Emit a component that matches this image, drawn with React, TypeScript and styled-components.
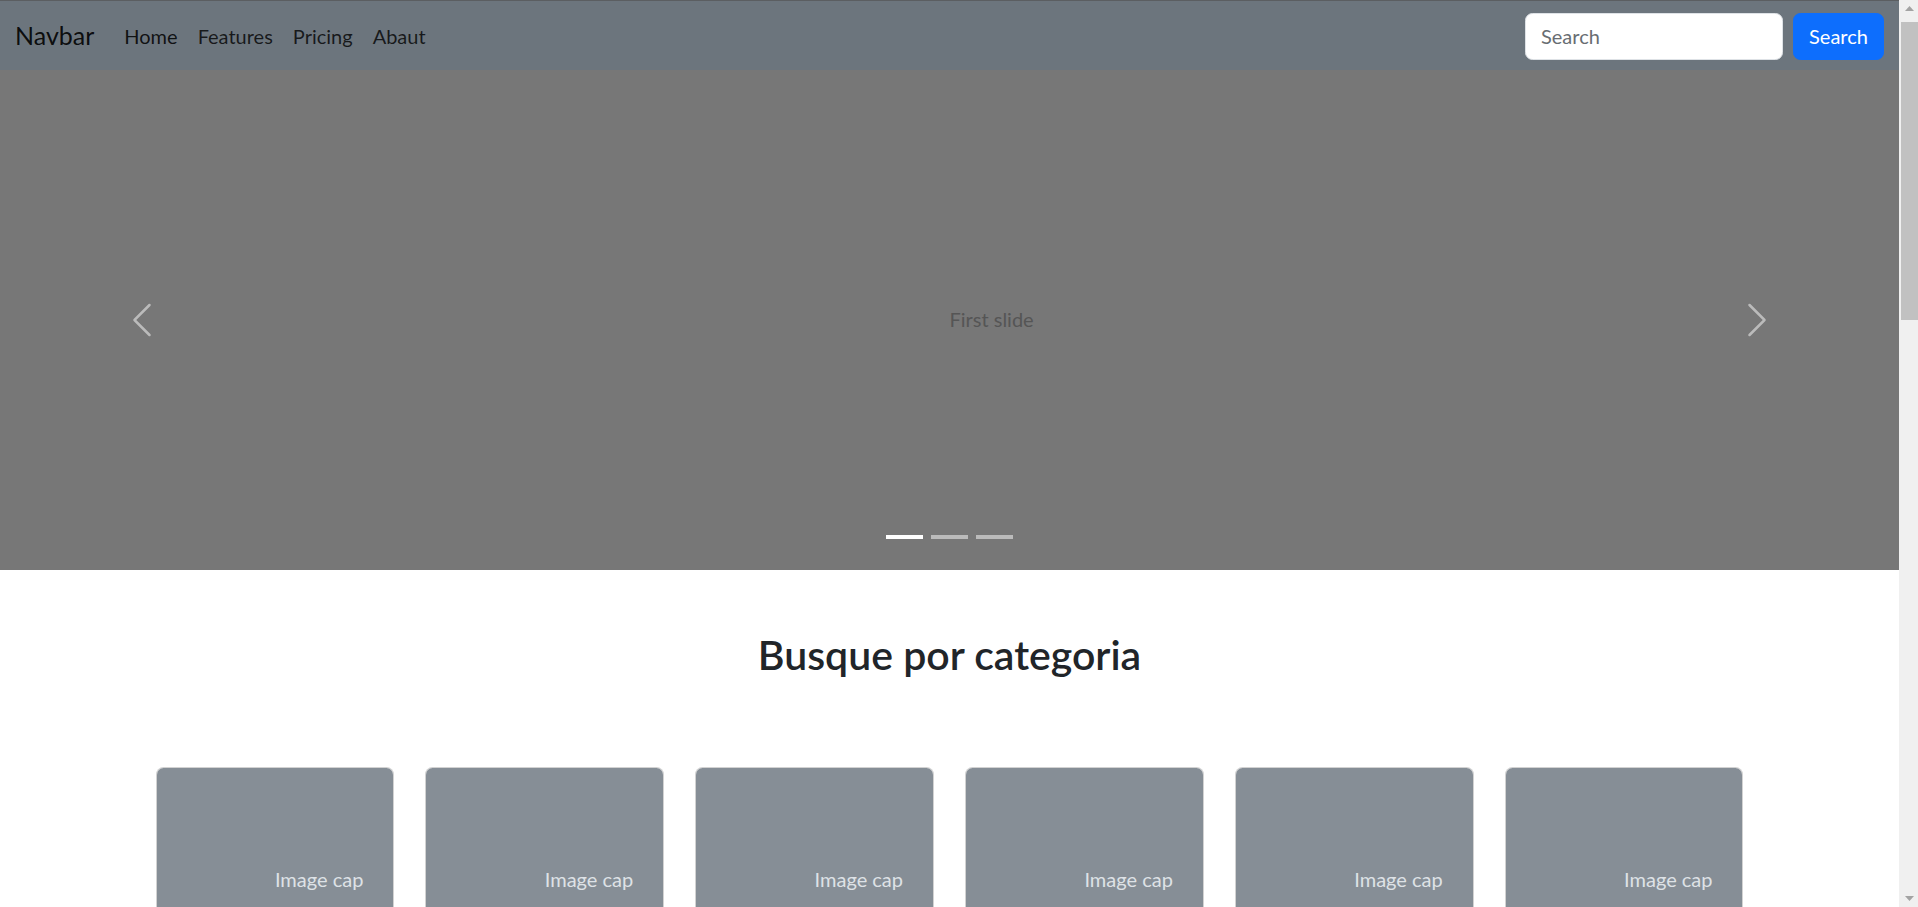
import React from "react";
import styled, { createGlobalStyle } from "styled-components";

const GlobalStyle = createGlobalStyle`
  html, body {
    margin: 0;
    padding: 0;
    height: 100%;
    overflow: hidden;
    background: #fff;
  }
  body {
    font-family: Lato, "Open Sans", "Liberation Sans", sans-serif;
    color: #212529;
  }
  * { box-sizing: border-box; }
`;

const Frame = styled.div`
  display: flex;
  height: 100vh;
  width: 100vw;
  overflow: hidden;
`;

const Page = styled.div`
  flex: 1;
  min-width: 0;
  overflow: hidden;
`;

/* ---------- Navbar ---------- */
const Navbar = styled.nav`
  height: 70px;
  background: #6c757d;
  border-top: 1px solid #5b5e61;
  display: flex;
  align-items: center;
  padding: 0 15px;
`;

const Brand = styled.a`
  font-size: 25px;
  line-height: 1.5;
  color: rgba(0, 0, 0, 0.9);
  text-decoration: none;
  margin-right: 20px;
  padding-top: 1px;
`;

const NavList = styled.ul`
  display: flex;
  list-style: none;
  margin: 0 auto 0 0;
  padding: 0;
`;

const NavLink = styled.a<{ $active?: boolean }>`
  display: block;
  padding: 0 10px;
  font-size: 20px;
  line-height: 1.5;
  color: ${(p) => (p.$active ? "rgba(0,0,0,0.85)" : "rgba(0,0,0,0.78)")};
  text-decoration: none;
`;

const SearchForm = styled.form`
  display: flex;
  align-items: center;
  gap: 10px;
  padding-top: 1px;
`;

const SearchInput = styled.input`
  width: 258px;
  height: 47px;
  border: 1px solid #dee2e6;
  border-radius: 7.5px;
  background: #fff;
  padding: 0 15px;
  font-family: inherit;
  font-size: 20px;
  color: #212529;
  outline: none;
  &::placeholder {
    color: #686d72;
  }
`;

const SearchButton = styled.button`
  height: 47px;
  min-width: 91px;
  padding: 0 15px;
  border: 1px solid #0d6efd;
  border-radius: 7.5px;
  background: #0d6efd;
  color: #fff;
  font-family: inherit;
  font-size: 20px;
  cursor: pointer;
`;

/* ---------- Carousel ---------- */
const Carousel = styled.div`
  position: relative;
  height: 500px;
  background: #777;
`;

const Slide = styled.div`
  height: 100%;
  display: flex;
  align-items: center;
  padding-left: 50%;
  padding-bottom: 2px;
  color: #555;
  font-size: 20px;
`;

const Control = styled.button<{ $side: "left" | "right" }>`
  position: absolute;
  top: 0;
  bottom: 0;
  ${(p) => (p.$side === "left" ? "left: 0;" : "right: 0;")}
  width: 15%;
  display: flex;
  align-items: center;
  justify-content: center;
  background: none;
  border: 0;
  padding: 0;
  opacity: 0.5;
  cursor: pointer;
`;

const Indicators = styled.div`
  position: absolute;
  left: 0;
  right: 0;
  bottom: 31px;
  display: flex;
  justify-content: center;
  gap: 7.5px;
`;

const Indicator = styled.button<{ $active?: boolean }>`
  width: 37.5px;
  height: 4px;
  padding: 0;
  border: 0;
  background: #fff;
  opacity: ${(p) => (p.$active ? 1 : 0.5)};
`;

const Chevron = ({ dir }: { dir: "left" | "right" }) => (
  <svg width="40" height="40" viewBox="0 0 16 16" fill="#fff">
    {dir === "left" ? (
      <path d="M11.354 1.646a.5.5 0 0 1 0 .708L5.707 8l5.647 5.646a.5.5 0 0 1-.708.708l-6-6a.5.5 0 0 1 0-.708l6-6a.5.5 0 0 1 .708 0z" />
    ) : (
      <path d="M4.646 1.646a.5.5 0 0 1 .708 0l6 6a.5.5 0 0 1 0 .708l-6 6a.5.5 0 0 1-.708-.708L10.293 8 4.646 2.354a.5.5 0 0 1 0-.708z" />
    )}
  </svg>
);

/* ---------- Categories ---------- */
const Section = styled.section`
  padding-top: 60px;
`;

const Heading = styled.h2`
  margin: 0;
  text-align: center;
  font-size: 41px;
  line-height: 1.2;
  font-weight: 600;
  color: #212529;
`;

const CardGrid = styled.div`
  width: 1588px;
  margin: 88px auto 0;
  display: grid;
  grid-template-columns: repeat(6, 1fr);
  gap: 31px;
`;

const Card = styled.div`
  border: 1px solid rgba(0, 0, 0, 0.175);
  border-radius: 7.5px;
  overflow: hidden;
  background: #fff;
`;

const ImageCap = styled.div`
  height: 225px;
  background: #868e96;
  display: flex;
  align-items: center;
  padding-left: 50%;
  padding-bottom: 3px;
  color: #dee2e6;
  font-size: 20px;
  white-space: nowrap;
`;

/* ---------- Scrollbar ---------- */
const ScrollTrack = styled.div`
  width: 19px;
  height: 100%;
  background: #f0f0f0;
  display: flex;
  flex-direction: column;
  align-items: flex-end;
`;

const ArrowBox = styled.div`
  width: 17px;
  height: 17px;
  display: flex;
  align-items: center;
  justify-content: center;
`;

const Thumb = styled.div`
  width: 17px;
  height: 298px;
  margin-top: 5px;
  background: #c1c1c1;
`;

const Spacer = styled.div`
  flex: 1;
`;

const Tri = ({ up }: { up?: boolean }) => (
  <svg width="9" height="5" viewBox="0 0 9 5">
    <polygon points={up ? "0,5 9,5 4.5,0" : "0,0 9,0 4.5,5"} fill="#a3a3a3" />
  </svg>
);

export default function App() {
  const links = ["Home", "Features", "Pricing", "Abaut"];
  return (
    <>
      <GlobalStyle />
      <Frame>
        <Page>
          <Navbar>
            <Brand href="#">Navbar</Brand>
            <NavList>
              {links.map((l, i) => (
                <li key={l}>
                  <NavLink href="#" $active={i === 0}>
                    {l}
                  </NavLink>
                </li>
              ))}
            </NavList>
            <SearchForm onSubmit={(e) => e.preventDefault()}>
              <SearchInput type="search" placeholder="Search" />
              <SearchButton type="submit">Search</SearchButton>
            </SearchForm>
          </Navbar>

          <Carousel>
            <Slide>First slide</Slide>
            <Control $side="left" aria-label="Previous">
              <Chevron dir="left" />
            </Control>
            <Control $side="right" aria-label="Next">
              <Chevron dir="right" />
            </Control>
            <Indicators>
              <Indicator $active />
              <Indicator />
              <Indicator />
            </Indicators>
          </Carousel>

          <Section>
            <Heading>Busque por categoria</Heading>
            <CardGrid>
              {Array.from({ length: 6 }).map((_, i) => (
                <Card key={i}>
                  <ImageCap>Image cap</ImageCap>
                </Card>
              ))}
            </CardGrid>
          </Section>
        </Page>
        <ScrollTrack>
          <ArrowBox>
            <Tri up />
          </ArrowBox>
          <Thumb />
          <Spacer />
          <ArrowBox>
            <Tri />
          </ArrowBox>
        </ScrollTrack>
      </Frame>
    </>
  );
}
